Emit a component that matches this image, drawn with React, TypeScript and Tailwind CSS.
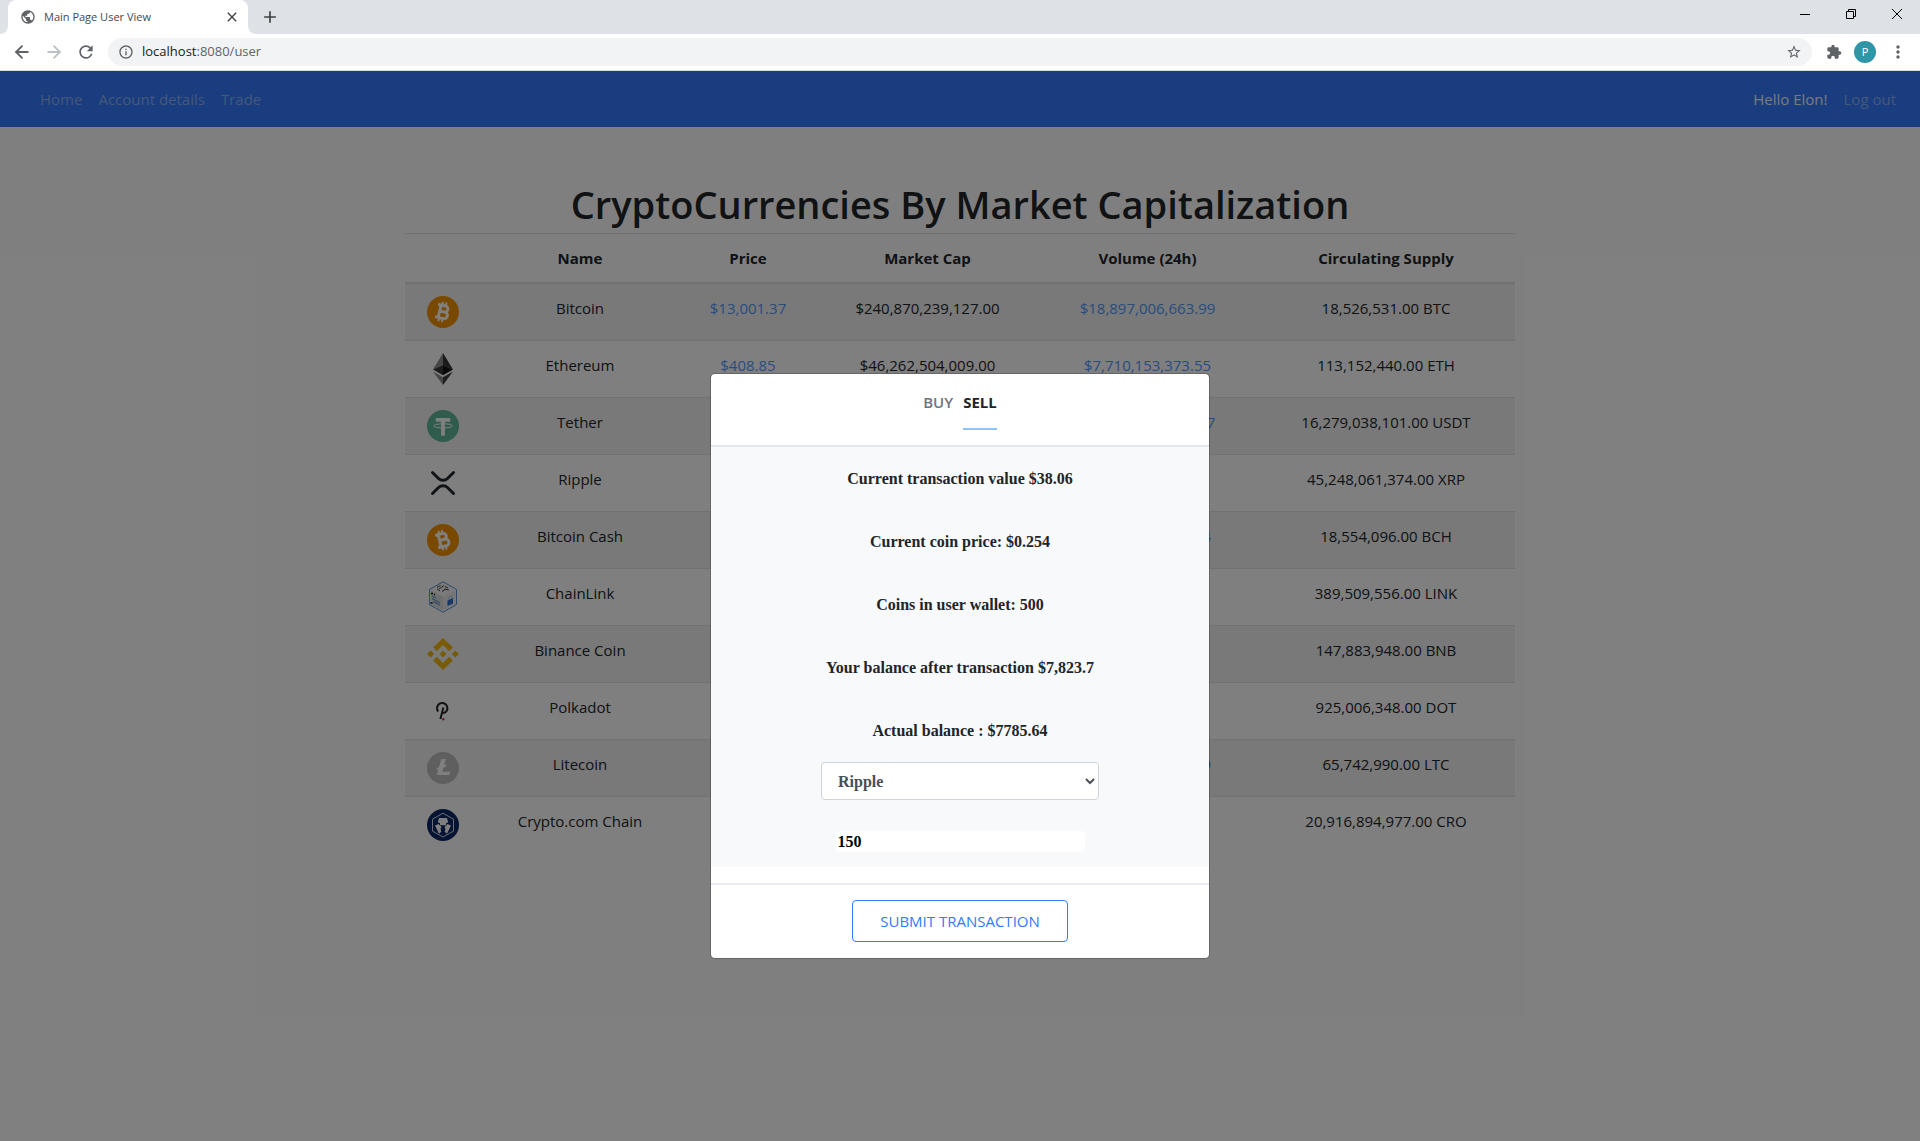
import React from "react";
import { ArrowLeft, ArrowRight } from "lucide-react";
import { MdExtension, MdStarBorder, MdRefresh, MdClose, MdAdd, MdMoreVert, MdInfoOutline, MdPublic } from "react-icons/md";

const SANS = "font-['Segoe_UI','Open_Sans',sans-serif]";
const SERIF = "font-['Source_Serif_Pro','Liberation_Serif',serif]";

function Bitcoin({ tilt }: { tilt: number }) {
  return (
    <svg viewBox="0 0 32 32" className="size-8">
      <circle cx="16" cy="16" r="16" fill="#f39200" />
      <g transform={`rotate(${tilt} 16 16)`} fill="none" stroke="#fff">
        <path d="M12.6 9.6v12.8M9.5 9.6h7.6a3 3 0 0 1 0 6.1h-4.6M12.5 15.700h5.400a3.300 3.300 0 0 1 0 6.700H9.5" strokeWidth="3" />
        <path d="M13.700 6v3.500M17.200 6v3.500M13.700 22.500V26M17.200 22.500V26" strokeWidth="2" />
      </g>
    </svg>
  );
}

function Ethereum() {
  return (
    <svg viewBox="0 0 32 32" className="size-8">
      <path d="M16 0 6 16.4 16 12z" fill="#8c8c8c" />
      <path d="m16 0 10 16.4L16 12z" fill="#343434" />
      <path d="m6 16.4 10-4.5v10.4z" fill="#393939" />
      <path d="m26 16.4-10-4.5v10.4z" fill="#141414" />
      <path d="m6 18.4 10 5.8V32z" fill="#8c8c8c" />
      <path d="m26 18.4-10 5.8V32z" fill="#3c3c3b" />
    </svg>
  );
}

function Tether() {
  return (
    <svg viewBox="0 0 32 32" className="size-8">
      <circle cx="16" cy="16" r="16" fill="#5fb898" />
      <path d="M8.800 8h14.400v3.700h-5.300v14h-3.800v-14H8.800z" fill="#fff" />
      <ellipse cx="16" cy="15.900" rx="9.400" ry="2.100" fill="none" stroke="#fff" strokeWidth="1" />
    </svg>
  );
}

function Ripple() {
  return (
    <svg viewBox="0 0 32 32" className="size-8" fill="none" stroke="#23292f" strokeWidth="3" strokeLinecap="round">
      <path d="m5.500 5.500 6 6a6.400 6.400 0 0 0 9 0l6-6M5.500 26.500l6-6a6.400 6.400 0 0 1 9 0l6 6" />
    </svg>
  );
}

function ChainLink() {
  return (
    <svg viewBox="0 0 32 32" className="size-8">
      <path d="M16 .8 29.500 8.400v15.200L16 31.200 2.500 23.600V8.400z" fill="#f7f7f7" stroke="#5b93dc" strokeWidth="1" />
      <path d="M4 9.500 16 15.500v14L4 23z" fill="#dedede" />
      <path d="M28 9.500 16 15.500v14L28 23z" fill="#ebebeb" />
      <path d="m10 6.500 3.500-2M12 8l5-3.500M15 10.500l3-2M17 8l5 1M18 5.500l3 1.500M13 10l-3-2" stroke="#444" strokeWidth="1" />
      <path d="m5 15 4 2M5 17.500l8 4.500M6 20.500l7 3.500" stroke="#6d97cf" strokeWidth="1.300" />
      <path d="M4 12.500h2M3.500 22h2M7 13.500h1" stroke="#111" strokeWidth="1.500" />
      <path d="m20.500 19.500 5.500-2.500v5.500l-5.500 2.500z" fill="#2f6fd0" />
      <path d="M21.500 18.500c0-3 3.500-4.500 3.500-1.500" fill="none" stroke="#aac4ea" />
    </svg>
  );
}

function Binance() {
  return (
    <svg viewBox="0 0 32 32" className="size-8" fill="#f0b90b">
      <path d="m9.800 13.200 6.200-6.200 6.200 6.200 3.600-3.600L16 0 6.200 9.600zM0 16l3.600-3.600L7.200 16l-3.600 3.600zM9.800 18.800l6.200 6.200 6.200-6.200 3.600 3.600L16 32l-9.800-9.600zM24.800 16l3.600-3.600L32 16l-3.600 3.600zM12.600 16l3.400-3.400 3.400 3.400-3.400 3.400z" />
    </svg>
  );
}

function Polkadot() {
  return (
    <svg viewBox="0 0 32 32" className="size-8" fill="none">
      <path d="M11.200 16.500a5.200 5.200 0 1 1 5 1.800M16.400 12.500 13.400 24" stroke="#222" strokeWidth="2" />
      <circle cx="16.300" cy="24.300" r="1.200" fill="#c8327f" />
    </svg>
  );
}

function Litecoin() {
  return (
    <svg viewBox="0 0 32 32" className="size-8">
      <circle cx="16" cy="16" r="16" fill="#bfbfbf" />
      <path d="M14.200 7h4.600l-1.700 6.300 2.500-1-.6 2.500-2.600 1-1.100 4h7.900L22.300 23H9.800l1.500-5.400-1.900.8.700-2.500 1.900-.8z" fill="#fff" />
    </svg>
  );
}

function Cro() {
  return (
    <svg viewBox="0 0 32 32" className="size-8">
      <circle cx="16" cy="16" r="16" fill="#0b2866" />
      <path d="m16 4.200 10.500 6v11.900L16 28 5.500 22.100V10.200z" fill="none" stroke="#d5dbe8" strokeWidth="1" />
      <path d="M12 9h8l1.200 4.200-2.200 1v2h-6v-2l-2.200-1zM8 16.500l3.500-1.500 3 3-1 2 .8 2.800-2.300 2zM24 16.500l-3.500-1.500-3 3 1 2-.8 2.800 2.300 2z" fill="#fff" />
    </svg>
  );
}

type Coin = { icon: React.ReactNode; name: string; price?: string; cap?: string; volume?: string; supply: string };

const COINS: Coin[] = [
  { icon: <Bitcoin tilt={14} />, name: "Bitcoin", price: "$13,001.37", cap: "$240,870,239,127.00", volume: "$18,897,006,663.99", supply: "18,526,531.00 BTC" },
  { icon: <Ethereum />, name: "Ethereum", price: "$408.85", cap: "$46,262,504,009.00", volume: "$7,710,153,373.55", supply: "113,152,440.00 ETH" },
  { icon: <Tether />, name: "Tether", volume: "$27,404,214,881.27", supply: "16,279,038,101.00 USDT" },
  { icon: <Ripple />, name: "Ripple", supply: "45,248,061,374.00 XRP" },
  { icon: <Bitcoin tilt={-14} />, name: "Bitcoin Cash", volume: "$1,632,750,196.34", supply: "18,554,096.00 BCH" },
  { icon: <ChainLink />, name: "ChainLink", supply: "389,509,556.00 LINK" },
  { icon: <Binance />, name: "Binance Coin", supply: "147,883,948.00 BNB" },
  { icon: <Polkadot />, name: "Polkadot", supply: "925,006,348.00 DOT" },
  { icon: <Litecoin />, name: "Litecoin", volume: "$2,641,905,338.59", supply: "65,742,990.00 LTC" },
  { icon: <Cro />, name: "Crypto.com Chain", supply: "20,916,894,977.00 CRO" },
];

const FACTS = [
  "Current transaction value $38.06",
  "Current coin price: $0.254",
  "Coins in user wallet: 500",
  "Your balance after transaction $7,823.7",
  "Actual balance : $7785.64",
];

function BrowserChrome() {
  return (
    <header className="font-['Open_Sans',sans-serif]">
      <div className="flex h-[34px] justify-between bg-[#dee1e6]">
        <div className="flex h-full items-center">
          <div className="h-full w-2 bg-white">
            <div className="h-full rounded-br-lg bg-[#dee1e6]" />
          </div>
          <div className="flex h-full w-60 items-center rounded-t-lg bg-white pr-2 pl-3">
            <MdPublic className="size-4 text-[#5f6368]" />
            <span className="ml-2 flex-1 text-[11px] text-[#45494d]">Main Page User View</span>
            <button aria-label="Close tab" className="text-[#3c4043]"><MdClose className="size-4" /></button>
          </div>
          <div className="h-full w-2 bg-white">
            <div className="h-full rounded-bl-lg bg-[#dee1e6]" />
          </div>
          <button aria-label="New tab" className="ml-1 text-[#3c4043]"><MdAdd className="size-5" /></button>
        </div>
        <div className="flex h-7 items-center gap-[34px] pr-[17px] text-black">
          <button aria-label="Minimize"><svg viewBox="0 0 12 12" className="size-3"><path d="M1 6.500h10" stroke="currentColor" /></svg></button>
          <button aria-label="Restore"><svg viewBox="0 0 12 12" className="size-3" fill="none" stroke="currentColor"><path d="M1.500 3.500h7v7h-7zM3.500 3.500v-2h7v7h-2" /></svg></button>
          <button aria-label="Close"><svg viewBox="0 0 12 12" className="size-3" stroke="currentColor"><path d="m1 1 10 10M11 1 1 11" /></svg></button>
        </div>
      </div>
      <div className="flex h-[37px] items-center border-b border-[#d8dbdf] bg-white px-3 text-[#5f6368]">
        <button aria-label="Back"><ArrowLeft className="size-5" strokeWidth={2.2} /></button>
        <button aria-label="Forward" className="ml-3 text-[#bdc1c6]"><ArrowRight className="size-5" strokeWidth={2.2} /></button>
        <button aria-label="Reload" className="ml-3"><MdRefresh className="size-5" /></button>
        <div className="ml-3 flex h-7 flex-1 items-center rounded-full bg-[#f1f3f4] px-2.5">
          <MdInfoOutline className="size-4" />
          <span className="ml-2 flex-1 text-[13px]"><span className="text-[#202124]">localhost</span>:8080/user</span>
          <button aria-label="Bookmark"><MdStarBorder className="size-4" /></button>
        </div>
        <button aria-label="Extensions" className="ml-3.5"><MdExtension className="size-4" /></button>
        <button className="ml-3 size-[22px] rounded-full bg-[#2f96a8] text-[11px] text-white">P</button>
        <button aria-label="Menu" className="ml-3"><MdMoreVert className="size-5" /></button>
      </div>
    </header>
  );
}

export default function App() {
  return (
    <div className={`flex min-h-screen flex-col bg-white text-[15px] text-[#212529] ${SANS}`}>
      <BrowserChrome />
      <div className="relative flex-1">
        <nav className="flex h-14 items-center gap-4 bg-[#327aff] pr-6 pl-10 text-[#8cb0f5]">
          <a href="#home">Home</a>
          <a href="#account">Account details</a>
          <a href="#trade" className="flex-1">Trade</a>
          <span className="text-[#f4f4f4]">Hello Elon!</span>
          <a href="#logout">Log out</a>
        </nav>

        <main className="mx-auto max-w-[1110px] pt-[52px]">
          <h1 className="mb-1 text-center text-[38px] leading-[50px] font-semibold">CryptoCurrencies By Market Capitalization</h1>
          <table className="w-full table-fixed text-center leading-6">
            <colgroup>
              <col className="w-[76px]" />
              <col className="w-[198px]" />
              <col className="w-[138px]" />
              <col className="w-[221px]" />
              <col className="w-[219px]" />
              <col />
            </colgroup>
            <thead>
              <tr className="border-t border-b-2 border-t-[#dee2e6] border-b-[#dee2e6]">
                <th className="p-3" />
                <th className="p-3 font-bold">Name</th>
                <th className="p-3 font-bold">Price</th>
                <th className="p-3 font-bold">Market Cap</th>
                <th className="p-3 font-bold">Volume (24h)</th>
                <th className="p-3 font-bold">Circulating Supply</th>
              </tr>
            </thead>
            <tbody>
              {COINS.map((c) => (
                <tr key={c.name} className="border-t border-[#dee2e6] align-top whitespace-nowrap odd:bg-[#f2f2f2]">
                  <td className="py-3"><div className="flex justify-center">{c.icon}</div></td>
                  <td className="py-3">{c.name}</td>
                  <td className="py-3">{c.price && <a href="#price" className="text-[#5399ff]">{c.price}</a>}</td>
                  <td className="py-3">{c.cap}</td>
                  <td className="py-3">{c.volume && <a href="#volume" className="text-[#5399ff]">{c.volume}</a>}</td>
                  <td className="py-3">{c.supply}</td>
                </tr>
              ))}
            </tbody>
          </table>
        </main>

        <div className="absolute inset-0 flex items-start justify-center bg-black/50 pt-[302px]">
          <section role="dialog" aria-label="Trade" className="w-[500px] overflow-hidden rounded-[5px] border border-black/20 bg-white bg-clip-padding">
            <div className="flex h-[73px] justify-center gap-2.5 border-b-2 border-[#e3e7eb] pt-4 leading-6 font-semibold">
              <button className="self-start text-[#6c757d]">BUY</button>
              <button className="flex h-10 flex-col border-b-2 border-[#90c2f9] font-bold">SELL</button>
            </div>
            <div className={`flex flex-col items-center bg-[#f8f9fb] pt-5 pb-[15px] text-base font-semibold ${SERIF}`}>
              {FACTS.map((f) => (
                <p key={f} className="mb-[39px] leading-6 last-of-type:mb-[19px]">{f}</p>
              ))}
              <select aria-label="Coin" defaultValue="Ripple" className="h-[38px] w-[278px] rounded border border-[#ced4da] bg-white px-3 text-[#495057]">
                {COINS.map((c) => <option key={c.name}>{c.name}</option>)}
              </select>
              <input aria-label="Amount" defaultValue="150" className="mt-[31px] h-[21px] w-[249px] rounded bg-white px-0.5 text-black" />
            </div>
            <div className="mt-4 flex justify-center border-t-2 border-[#e8ecf0] pt-[15px] pb-4">
              <button className="h-[42px] w-[216px] rounded border border-[#327aff] text-[#327aff]">SUBMIT TRANSACTION</button>
            </div>
          </section>
        </div>
      </div>
    </div>
  );
}
